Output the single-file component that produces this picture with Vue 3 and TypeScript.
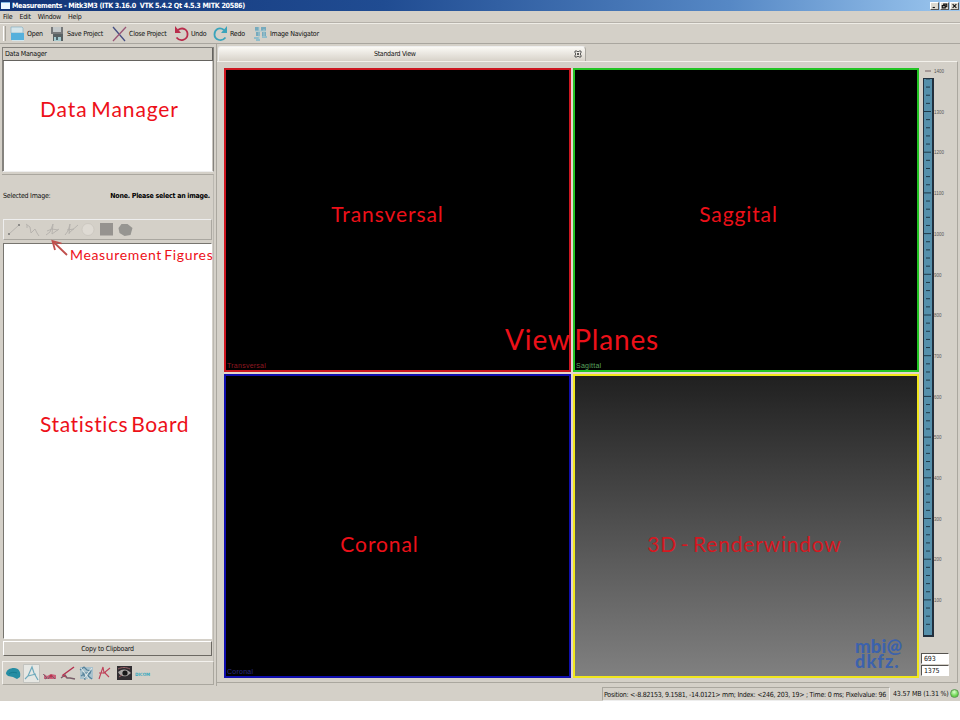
<script setup lang="ts">
interface Plane { id: string; corner: string; note: string }

const menus: string[] = ['File', 'Edit', 'Window', 'Help']
const planes: Plane[] = [
  { id: 'transversal', corner: 'Transversal', note: 'Transversal' },
  { id: 'sagittal', corner: 'Sagittal', note: 'Saggital' },
  { id: 'coronal', corner: 'Coronal', note: 'Coronal' },
  { id: 'render', corner: '', note: '3D - Renderwindow' },
]
const levels: number[] = Array.from({ length: 14 }, (_, i) => 1400 - i * 100)
const ticks: number[] = Array.from({ length: 68 }, (_, i) => i + 1)
const tickY = (i: number): number => 3.8 + i * 8.14
</script>

<template>
  <div class="frame">
    <header class="title">
      <i class="app-icon"></i><span class="title-text">Measurements - Mitk3M3 (ITK 3.16.0&nbsp; VTK 5.4.2 Qt 4.5.3 MITK 20586)</span>
      <div class="controls">
        <svg viewBox="0 0 9 8"><path d="M2 6h3" /></svg>
        <svg viewBox="0 0 9 8"><path d="M3.5 3V1.500h4v3.500H6M1.500 3.500h4v3h-4z" /></svg>
        <svg viewBox="0 0 9 8"><path d="M2 1.500l5 5M7 1.500l-5 5" /></svg>
      </div>
    </header>
    <nav class="menu"><span v-for="m in menus" :key="m">{{ m }}</span></nav>
    <div class="toolbar">
      <i class="grip"></i>
      <div class="tool open">
        <svg viewBox="0 0 15 16"><path d="M1 1h11l1 1v5H1z" fill="#d5e5ea" stroke="#78aac0" stroke-width=".6" /><path d="M1 7h13v7H1z" fill="#55b0dc" /><path d="M2 14.500h12" stroke="#d0e5ed" /></svg>
        <span>Open</span>
      </div>
      <div class="tool save">
        <svg viewBox="0 0 15 16"><path d="M1 1h12v7H1z" fill="#77797a" /><path d="M3 1h8v5H3z" fill="#c3c8c9" /><path d="M3 8h10v7H3z" fill="#596163" /><path d="M4 11h7v4H4z" fill="#a6cbd0" /><path d="M6 11h2v3H6z" fill="#4d666d" /></svg>
        <span>Save Project</span>
      </div>
      <div class="tool close">
        <svg viewBox="0 0 15 16"><path d="M1 1l12 14" stroke="#454e82" stroke-width="1.300" /><path d="M14 1L1 15" stroke="#995575" stroke-width="1.300" /></svg>
        <span>Close Project</span>
      </div>
      <div class="tool undo">
        <svg viewBox="0 0 15 16"><path d="M4 4C9 .5 14 4 13.500 9 13 14 6 16 2.500 11.500" fill="none" stroke="#b92d4c" stroke-width="1.800" /><path d="M1 0v7h6z" fill="#b92d4c" /></svg>
        <span>Undo</span>
      </div>
      <div class="tool redo">
        <svg viewBox="0 0 15 16"><path d="M11 4C6 0 1.500 4 1.500 8.500c0 5 7 8 11 3" fill="none" stroke="#3ba4bb" stroke-width="1.800" /><path d="M14 0v7H8z" fill="#3ba4bb" /></svg>
        <span>Redo</span>
      </div>
      <div class="tool navigator">
        <svg viewBox="0 0 15 16"><g fill="#76aabd"><path d="M2 1h4v4H2zM8 1h5v4H8zM3 6h4v4H3zM9 6h4v4H9z" /><path d="M1 11h5v2H1zM9 10h5v2H9zM3 13h4v2H3z" fill="#91bdca" /></g><path d="M6 1v12M2 5h11M11 3v8" stroke="#a5c8d0" /></svg>
        <span>Image Navigator</span>
      </div>
    </div>

    <main class="body">
      <aside class="side">
        <section class="data">
          <h2>Data Manager</h2>
          <div class="data-list"><span class="note">Data Manager</span></div>
        </section>
        <section class="measure">
          <div class="selected"><span>Selected Image:</span><b>None. Please select an image.</b></div>
          <div class="figures">
            <svg viewBox="0 0 140 20">
              <g fill="none" stroke="#b3b0ab" stroke-width=".9">
                <path d="M5 14L15 5" />
                <path d="M22 4l4 3 1 6 4-4 2 4 2 3M23 5v3" />
                <path d="M42 15l4-3 3-8-1 10M43 11l5-2 6 1M48 14l7-5" />
                <path d="M61 15l3-4 2-7-1 10M65 13l9-8M63 10l7-1" />
              </g>
              <path d="M4 13h2v2H4zM14 4h2v2h-2z" fill="#8d8c89" />
              <circle cx="84" cy="9.500" r="6" fill="#dedad3" stroke="#c7c3bc" stroke-width=".7" />
              <path d="M96 3h13v12.500H96z" fill="#96938f" />
              <path d="M114.500 8l3-4 6 0 5 4-2 7-6 1-5-3z" fill="#969591" />
            </svg>
          </div>
          <div class="stats">
            <div class="callout">
              <svg viewBox="0 0 18 18"><path d="M16 17L2.500 4M4 12L1.500 3l9 2.500" /></svg>
              <span>Measurement Figures</span>
            </div>
            <span class="note board">Statistics Board</span>
          </div>
          <button>Copy to Clipboard</button>
        </section>
        <div class="modules">
          <svg viewBox="0 0 150 22">
            <path d="M1 11c0-4 4-6 8-6 5 0 7 4 6 9l-3 2-4-2-5-1z" fill="#268da3" /><path d="M4 11c2-2 5-2 8-1" fill="none" stroke="#107387" stroke-width=".7" />
            <path d="M18.500 1.500h16v18h-16z" fill="#e6e7e3" stroke="#c2c3bf" /><path d="M20 16l3-3 4-9 2 6 4 7M23 13l8-2" fill="none" stroke="#6faabc" stroke-width="1.200" />
            <path d="M39 11l3 2 4-2 5 1v4H39z" fill="#c9627a" /><path d="M38 11l4 4-2 1M43 16l3-4 4 4" fill="none" stroke="#695c68" stroke-width=".8" /><circle cx="46" cy="13" r="1.500" fill="#b93450" />
            <path d="M58 12L69 4" stroke="#b52e4e" stroke-width="1.400" /><path d="M56 15l4-3 2 3 3 0 5 1" fill="none" stroke="#795e69" stroke-width="1.500" /><path d="M57 12l4 2" stroke="#bd3f5b" stroke-width="1.200" />
            <path d="M75 4h13v12H75z" fill="#a9c2cd" /><path d="M75 7l4-3 3 3 4 1-3 5 4 3M76 13l3-2 1 6M86 10h-9" fill="none" stroke="#55829b" stroke-width="1.200" /><path d="M76 5l8 11M79 15l8-10" stroke="#e0e9e9" />
            <path d="M94 16l4-12 1 6 6-5M94 10h7M99 9l5 5" fill="none" stroke="#bf4159" stroke-width="1.100" />
            <path d="M112 3h15v14h-15z" fill="#302d31" /><path d="M113 9c5-4 9-3 13 1l-4 3c-4 1-7 0-9-4z" fill="#aaa7a6" /><circle cx="120" cy="10" r="2.600" fill="#171819" /><path d="M113 6c4-2 8-2 12 0M114 14l3-2" stroke="#9b6368" fill="none" />
          </svg><span class="dicom">DICOM</span>
        </div>
      </aside>

      <section class="editor">
        <div class="tab"><span>Standard View</span><svg viewBox="0 0 8 8"><path d="M1 1h2l1 1 1-1h2v2L6 4l1 1v2H5L4 6 3 7H1V5l1-1-1-1zM3 3l2 2M5 3L3 5" /></svg></div>
        <div class="workspace">
          <div class="planes">
            <article v-for="p in planes" :key="p.id" :class="['plane', p.id]">
              <span class="note">{{ p.note }}</span>
              <small v-if="p.corner">{{ p.corner }}</small>
              <div v-else class="logo"><span>mbi@</span><span>dkfz.</span></div>
            </article>
            <span class="planes-note">View Planes</span>
          </div>
          <div class="level">
            <svg class="scale" viewBox="0 0 36 578">
              <path d="M3 4h6" stroke="#786568" />
              <path d="M1 11h11v559H1z" fill="#222f3d" />
              <path d="M2 12h8v556H2z" fill="#5690ab" />
              <path v-for="i in ticks" :key="i" :d="i % 5 === 0 ? `M2 ${tickY(i)}h7` : `M4 ${tickY(i)}h4`" class="tick" />
              <text v-for="(n, i) in levels" :key="n" x="12" :y="6 + i * 40.7">{{ n }}</text>
            </svg>
            <div class="field">693</div>
            <div class="field">1375</div>
          </div>
        </div>
      </section>
    </main>
    <footer class="status">
      <span class="position">Position: &lt;-8.82153, 9.1581, -14.0121&gt; mm; Index: &lt;246, 203, 19&gt; ; Time: 0 ms; Pixelvalue: 96</span>
      <span class="memory">43.57 MB (1.31 %)</span><i class="lamp"></i>
    </footer>
  </div>
</template>

<style>
body { background: #fff; }
</style>
<style scoped>
* { box-sizing: border-box; }
svg { display: block; flex: none; }
.frame { width: 960px; height: 701px; overflow: hidden; display: flex; flex-direction: column; background: #d4d0c8; color: #111; font: 7px/10px "DejaVu Sans Condensed", "DejaVu Sans", sans-serif; font-stretch: condensed; letter-spacing: -.25px; white-space: nowrap; }
.title { height: 11px; flex: none; display: flex; align-items: center; padding: 0 1px; background: linear-gradient(90deg, #123477, #204c92 40%, #5688c5 76%, #9cc7ef); color: #fff; }
.app-icon { width: 9px; height: 7px; background: #eff8ff; border-top: 1px solid #83b7e2; margin-right: 2px; }
.title-text { font-weight: bold; font-size: 7.2px; letter-spacing: -.32px; }
.controls { display: flex; margin-left: auto; }
.controls svg { width: 9px; height: 8px; background: #ddd9d0; border: 1px solid #fff; border-right-color: #555; border-bottom-color: #555; margin-left: 1px; }
.controls path { fill: none; stroke: #111; stroke-width: 1.5; }
.menu { height: 12px; flex: none; display: flex; align-items: center; gap: 7px; padding-left: 3px; border-bottom: 1px solid #b5b1aa; }
.toolbar { height: 21px; flex: none; display: flex; align-items: center; border-top: 1px solid #eeece6; border-bottom: 1px solid #a9a69f; padding-left: 3px; }
.grip { width: 3px; height: 15px; border-left: 1px solid #fff; border-right: 1px solid #a5a29a; margin-right: 4px; }
.tool { display: flex; align-items: center; gap: 2px; flex: none; }
.tool svg { width: 15px; height: 16px; }
.open { width: 40px; }
.save { width: 62px; }
.close { width: 62px; }
.undo { width: 39px; }
.redo { width: 40px; }
.body { display: flex; height: 642px; flex: none; }
.side { width: 217px; padding: 3px 2px 0; border-right: 1px solid #aaa79f; display: flex; flex-direction: column; }
.data { height: 125px; flex: none; border: 1px solid #85837e; border-bottom-color: #eee; }
h2 { height: 13px; margin: 0; padding: 1px 2px; border-bottom: 1px solid #65635f; border-right: 1px solid #65635f; font: inherit; }
.data-list { height: 110px; background: #fff; border-right: 1px solid #c9c5be; border-left: 1px solid #85837e; padding: 36px 0 0 36px; }
.note { color: #ed1019; font: 21px/24px Lato, Carlito, sans-serif; letter-spacing: .9px; word-spacing: -2.5px; }
.board { letter-spacing: .62px; word-spacing: -3px; }
.measure { height: 487px; flex: none; margin-top: 2px; border-top: 1px solid #aaa79f; border-right: 1px solid #bbb8b1; padding: 0 1px 0 1px; display: flex; flex-direction: column; }
.selected { height: 44px; flex: none; display: flex; justify-content: space-between; align-items: center; padding: 0 2px 2px 0; }
.selected b { color: #000; }
.figures { height: 21px; flex: none; border: 1px solid #eee; border-right-color: #aaa7a0; border-bottom-color: #aaa7a0; }
.figures svg { width: 140px; height: 20px; }
.stats { margin-top: 3px; height: 396px; flex: none; border: 1px solid #fff; border-left-color: #77756f; border-top-color: #77756f; background: #fff; position: relative; padding: 168px 0 0 36px; }
.callout { position: absolute; left: 47px; top: -6px; display: flex; color: #ed1019; font: 14px/20px Lato, Carlito, sans-serif; letter-spacing: .65px; word-spacing: -2px; }
.callout svg { width: 18px; height: 18px; }
.callout svg path { fill: none; stroke: #c0504d; stroke-width: 1.8; }
.callout span { padding-top: 7px; padding-left: 1px; }
button { margin: 2px 0 0; height: 15px; flex: none; padding: 1px 0 0; font: inherit; letter-spacing: -.22px; color: #111; background: #d4d0c8; border: 1px solid #fff; border-right-color: #6c6963; border-bottom-color: #6c6963; }
.modules { height: 24px; flex: none; border: 1px solid #f3f1ed; border-bottom-color: #aaa79f; border-right-color: #aaa79f; display: flex; padding: 1px 0 0 2px; }
.modules svg { width: 150px; height: 22px; margin-right: -20px; }
.dicom { color: #34a9be; font-weight: bold; font-size: 4.5px; line-height: 23px; letter-spacing: -.05px; }
.editor { width: 743px; padding-top: 2px; }
.tab { margin-left: 1px; height: 15px; width: 368px; border: 1px solid #eee; border-right-color: #aaa7a0; border-bottom: 0; border-radius: 3px 4px 0 0; background: linear-gradient(#faf9f5, #d7d2c9); display: flex; align-items: center; justify-content: space-between; padding: 0 3px 0 155px; letter-spacing: -.3px; }
.tab svg { width: 8px; height: 8px; }
.tab path { fill: none; stroke: #363636; stroke-width: .8; }
.workspace { height: 622px; margin-right: 2px; border-top: 1px solid #f3f1eb; border-right: 1px solid #aaa79f; border-bottom: 1px solid #aaa79f; padding: 6px 0 0 7px; display: flex; }
.planes { position: relative; flex: none; width: 695px; height: 610px; display: grid; grid-template-columns: 347px 346px; grid-template-rows: 304px 304px; gap: 2px; background: #e5d6c9; }
.plane { position: relative; display: flex; flex-direction: column; align-items: center; border: 2px solid; background: #000; padding-top: 132px; }
.transversal { border-color: #cd1720; padding-right: 20px; }
.sagittal { border-color: #23c423; padding-right: 15px; }
.coronal { border-color: #100fae; padding-top: 156px; padding-right: 36px; }
.render { border-color: #f1e71c; background: linear-gradient(#202020, #808080); padding-top: 156px; padding-right: 3px; }
.render .note { letter-spacing: .8px; color: #d51821; }
.plane small { position: absolute; left: 1px; bottom: 0; font: 7px/9px "Liberation Sans", sans-serif; letter-spacing: .25px; }
.transversal small { color: #901820; }
.sagittal small { color: #5aa55e; }
.coronal small { color: #282986; }
.planes-note { position: absolute; left: 281px; top: 253px; color: #ed1019; font: 28px/36px Lato, Carlito, sans-serif; letter-spacing: .85px; word-spacing: -4px; }
.logo { position: absolute; right: 12px; bottom: 7px; display: flex; flex-direction: column; width: 50px; color: #3c62ac; font: 900 18.5px/16px Lato, sans-serif; letter-spacing: .2px; }
.logo span:last-child { font-size: 18px; line-height: 15px; letter-spacing: 1.1px; }
.level { width: 36px; margin: -1px 0 0 3px; }
.scale { width: 36px; height: 578px; margin-bottom: 8px; }
.tick { stroke: #203a49; stroke-width: 1; }
.scale text { font: 4.5px "Liberation Sans", sans-serif; letter-spacing: 0; fill: #555; }
.field { width: 28px; height: 11px; margin: 0 0 1px -1px; padding-left: 2px; border: 1px solid #fff; border-top-color: #55534f; border-left-color: #55534f; background: #fff; line-height: 10px; letter-spacing: -.15px; }
.status { height: 15px; display: flex; align-items: center; padding-left: 602px; }
.position { height: 14px; width: 288px; flex: none; border: 1px solid #aaa79f; border-right-color: #eee; border-bottom-color: #eee; padding-left: 1px; line-height: 14px; }
.memory { margin-left: 3px; letter-spacing: -.18px; }
.lamp { width: 9px; height: 9px; flex: none; margin-left: auto; margin-right: 1px; border-radius: 50%; border: 1px solid #5b9754; background: radial-gradient(circle at 45% 30%, #dcffd0, #65d348 65%); }
</style>
